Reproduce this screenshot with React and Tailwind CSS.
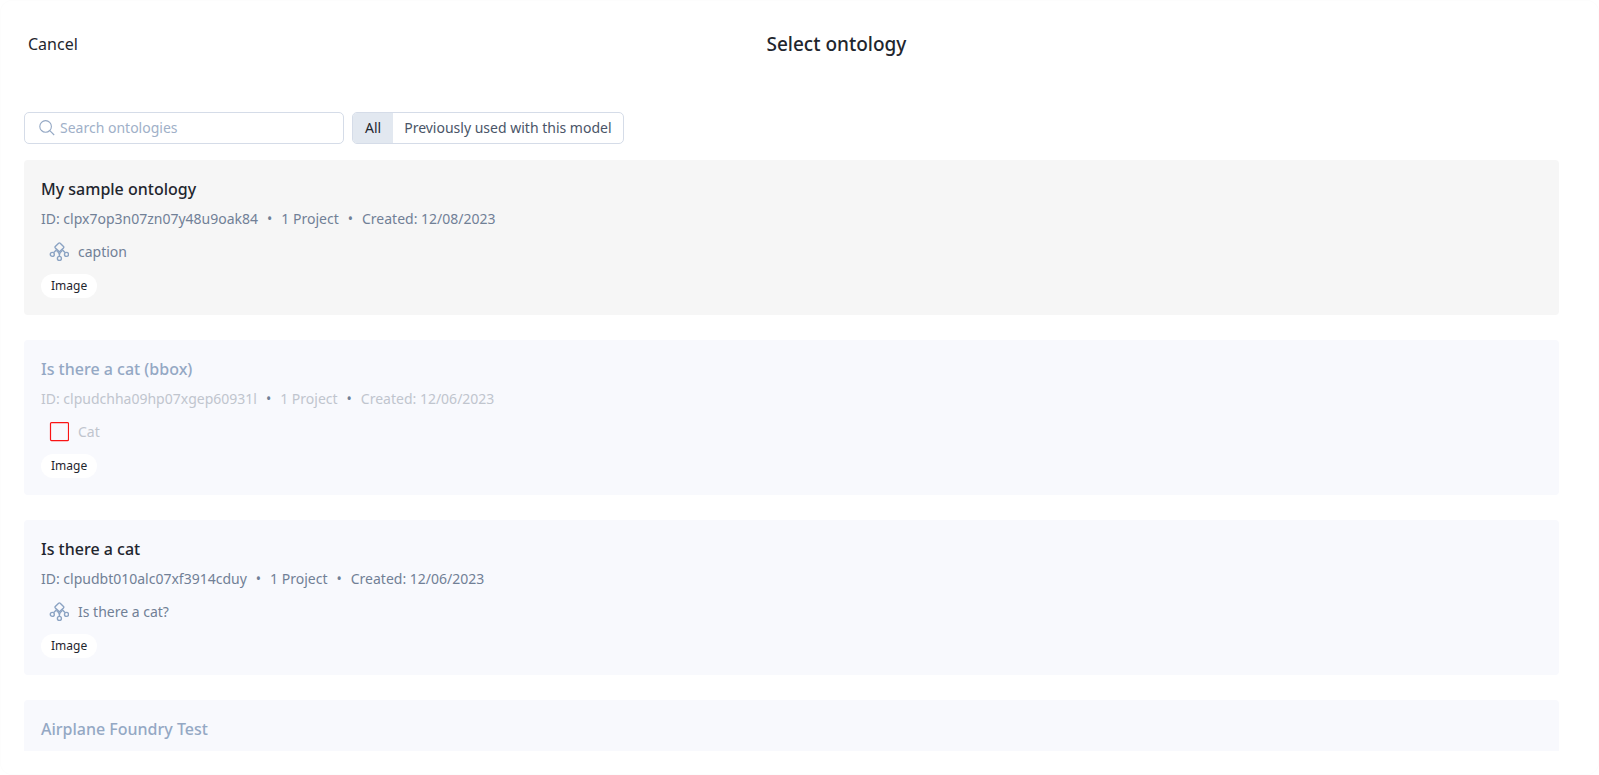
import { useId, useState } from 'react'
import clsx from 'clsx'

const FILTERS = ['All', 'Previously used with this model']

const ONTOLOGIES = [
  {
    id: 'clpx7op3n07zn07y48u9oak84',
    name: 'My sample ontology',
    projects: '1 Project',
    created: '12/08/2023',
    feature: { kind: 'classification', label: 'caption' },
    mediaType: 'Image',
  },
  {
    id: 'clpudchha09hp07xgep60931l',
    name: 'Is there a cat (bbox)',
    projects: '1 Project',
    created: '12/06/2023',
    feature: { kind: 'bbox', label: 'Cat' },
    mediaType: 'Image',
    disabled: true,
  },
  {
    id: 'clpudbt010alc07xf3914cduy',
    name: 'Is there a cat',
    projects: '1 Project',
    created: '12/06/2023',
    feature: { kind: 'classification', label: 'Is there a cat?' },
    mediaType: 'Image',
  },
  { id: 'airplane', name: 'Airplane Foundry Test', disabled: true },
]

function SearchIcon() {
  return (
    <svg className="size-4 shrink-0 text-[#94a8c4]" viewBox="0 0 16 16" fill="none" stroke="currentColor" strokeWidth="1.1">
      <circle cx="6.6" cy="6.4" r="5.8" />
      <path d="M10.8 10.6l4.4 4.4" />
    </svg>
  )
}

function ClassificationIcon() {
  return (
    <svg className="size-5 text-[#8ba3c3]" viewBox="0 0 20 20" fill="none" stroke="currentColor" strokeWidth="1.4">
      <path d="M9.6 1.2q.8-.6 1.6 0l3.3 3.3q.6.7 0 1.4l-3.3 3.2q-.8.6-1.6 0L6.3 5.9q-.6-.7 0-1.4z" />
      <path d="M7.8 7.4L4.8 10.6M13 7.4l3 3.2M7.6 9.4q2.8.4 2.8 4.6q0-4.2 2.8-4.6" />
      <circle cx="3.3" cy="12.4" r="2" />
      <circle cx="17.5" cy="12.4" r="2" />
      <circle cx="10.4" cy="16.4" r="2" />
    </svg>
  )
}

function BoxIcon() {
  return (
    <svg className="size-5 text-[#fa1414]" viewBox="0 0 20 20" fill="none" stroke="currentColor" strokeWidth="1.2">
      <rect x="1.5" y="0.6" width="18" height="18" rx="1" />
    </svg>
  )
}

function OntologyCard({ ontology, selected }) {
  const { id, name, projects, created, feature, mediaType, disabled } = ontology
  const muted = disabled ? 'text-[#c0c5ce]' : 'text-[#718096]'

  return (
    <li
      className={clsx(
        'min-h-[155px] shrink-0 rounded border border-transparent p-4',
        selected ? 'bg-[#f6f6f6]' : 'bg-[#f8f9fd]'
      )}
    >
      <h2 className={clsx('text-base leading-6 font-medium', disabled ? 'text-[#94a8c4]' : 'text-[#1f262e]')}>{name}</h2>
      {feature && (
        <>
          <div className="mt-2 flex gap-[9px] text-sm leading-5 text-[#718096]">
            <span className={muted}>ID: {id}</span>
            <span>•</span>
            <span className={muted}>{projects}</span>
            <span>•</span>
            <span className={muted}>Created: {created}</span>
          </div>
          <div className={clsx('mt-[9px] flex h-7 items-center gap-[9px] pl-2 text-sm', muted)}>
            {feature.kind === 'bbox' ? <BoxIcon /> : <ClassificationIcon />}
            {feature.label}
          </div>
          <div className="mt-2 flex">
            <span className="rounded-full bg-white px-2.5 text-xs leading-6 text-[#1f262e]">{mediaType}</span>
          </div>
        </>
      )}
    </li>
  )
}

export default function App() {
  const [search, setSearch] = useState('')
  const [filter, setFilter] = useState(FILTERS[0])
  const searchId = useId()

  return (
    <main className="flex h-screen flex-col rounded-xl bg-white px-6 pb-6 font-['Noto_Sans',sans-serif] inset-ring inset-ring-[#fdfdfd]">
      <header className="flex h-22 shrink-0 items-center gap-4 text-[#1f262e]">
        <button type="button" className="px-1 text-base">
          Cancel
        </button>
        <h1 className="flex-1 text-center text-[19px] font-medium">Select ontology</h1>
      </header>

      <div className="mt-6 flex shrink-0 gap-2 text-sm">
        <label
          htmlFor={searchId}
          className="flex h-8 w-80 items-center gap-[5px] rounded-[5px] border border-[#d5dce8] px-3.5"
        >
          <SearchIcon />
          <input
            id={searchId}
            type="text"
            aria-label="Search ontologies"
            placeholder="Search ontologies"
            value={search}
            onChange={(e) => setSearch(e.target.value)}
            className="min-w-0 flex-1 outline-none placeholder:text-[#a0b0c8]"
          />
        </label>
        <div className="flex h-8 overflow-hidden rounded-[5px] border border-[#d5dce8]">
          {FILTERS.map((item) => (
            <button
              key={item}
              type="button"
              onClick={() => setFilter(item)}
              className={clsx(
                item === filter ? 'bg-[#e2e8f0] text-[#1f262e]' : 'text-[#4a5568]',
                item === 'All' ? 'px-3' : 'px-[11px]'
              )}
            >
              {item}
            </button>
          ))}
        </div>
      </div>

      <ul className="mt-4 flex min-h-0 flex-1 flex-col gap-[25px] overflow-y-auto pr-4 [scrollbar-width:none]">
        {ONTOLOGIES.map((ontology, index) => (
          <OntologyCard key={ontology.id} ontology={ontology} selected={index === 0} />
        ))}
      </ul>
    </main>
  )
}
